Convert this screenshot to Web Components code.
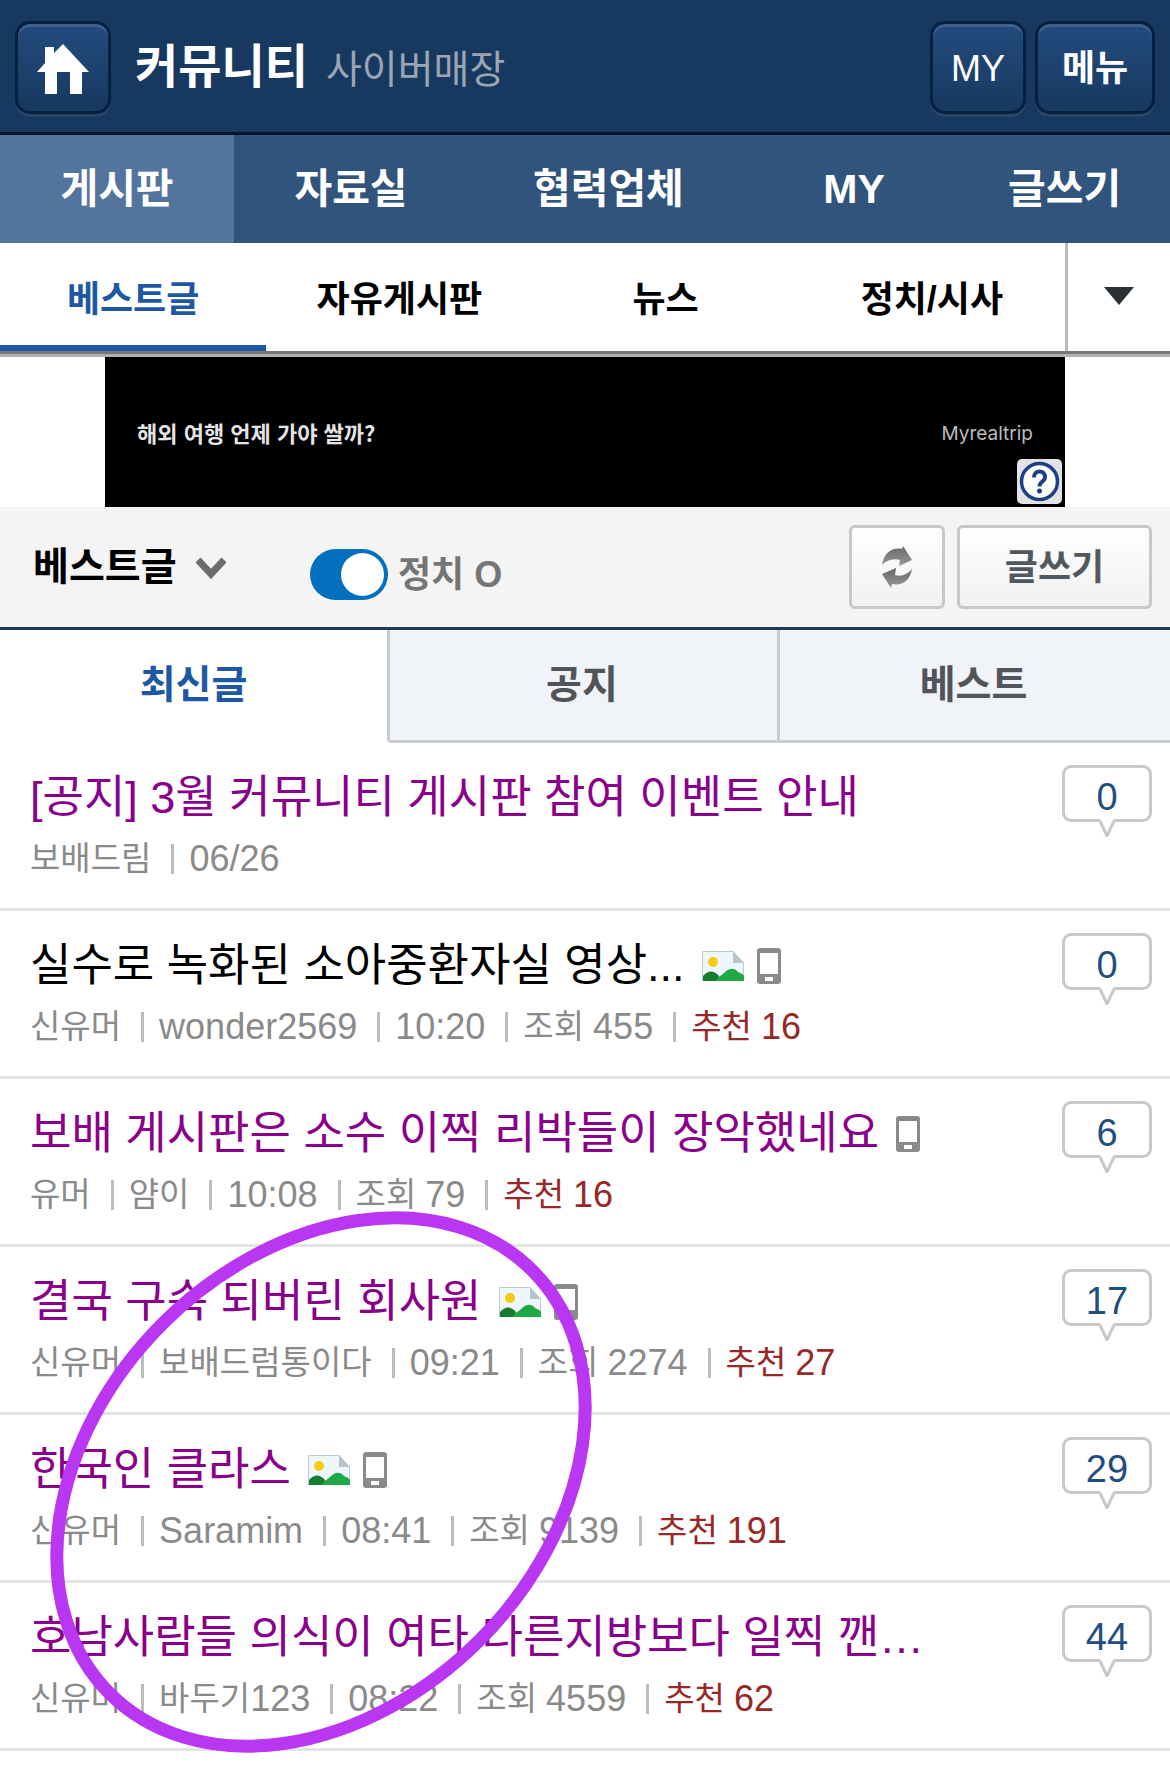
<!DOCTYPE html>
<html lang="ko">
<head>
<meta charset="utf-8">
<meta name="viewport" content="width=device-width, initial-scale=1">
<title>커뮤니티</title>
<style>
    body {
        min-height: 100vh;
        margin: 0;
        background: #fff;
        color: #000;
        font-family: "Liberation Sans", "Noto Sans CJK KR", sans-serif;
    }
</style>
</head>
<body>
<community-page></community-page>

<script>
class SiteHeader extends HTMLElement {

    constructor() {
        super();
        this.attachShadow({mode: 'open'});
        this.render();
    }

    render() {
        this.shadowRoot.innerHTML =
        `
        <style>
            :host {
                display: block;
                background: #17395f;
                border-bottom: 3px solid #03142c;
            }
            header {
                display: flex;
                align-items: center;
                gap: 9px;
                height: 93px;
                padding: 21px 15px 18px;
            }
            .btn {
                box-sizing: border-box;
                display: flex;
                align-items: center;
                justify-content: center;
                width: 96px;
                height: 93px;
                padding: 3px 0 0;
                border: 3px solid #06203f;
                border-radius: 15px;
                background: linear-gradient(#244b7e, #17395f);
                box-shadow: inset 0 3px 0 #3f608c, 0 3px 0 #2b4767;
                color: #fff;
                font: 500 36px/48px "Liberation Sans", "Noto Sans CJK KR", sans-serif;
            }
            .menu { width: 120px; font-weight: 700; }
            .titles {
                display: flex;
                align-items: baseline;
                gap: 18px;
                flex: 1;
                margin: 0 0 2px 15px;
                white-space: nowrap;
            }
            h1 { margin: 0; font-size: 47px; line-height: 60px; }
            a { text-decoration: none; }
            .titles a { color: #fff; }
            .titles .sub { color: #9ba5b3; font-size: 39px; font-weight: 400; }
        </style>
        <header>
            <a class="btn" href="#" aria-label="홈">
                <svg width="52" height="50" viewBox="0 0 52 50"><path fill="#fff" d="M26 0 52 28H45V50H33V28H20V50H8V28H0L8 19V3H17V9Z"/></svg>
            </a>
            <div class="titles">
                <h1><a href="#">커뮤니티</a></h1>
                <a class="sub" href="#">사이버매장</a>
            </div>
            <button class="btn">MY</button>
            <button class="btn menu">메뉴</button>
        </header>
        `;
    }
}

class MainNav extends HTMLElement {

    constructor() {
        super();
        this.attachShadow({mode: 'open'});
        this.render();
    }

    render() {
        this.shadowRoot.innerHTML =
        `
        <style>
            :host { display: block; background: #30547b; }
            nav {
                display: grid;
                grid-template-columns: 20fr 20fr 24fr 18fr 18fr;
            }
            a {
                padding: 26px 0;
                color: #fff;
                font-size: 41px;
                font-weight: 700;
                line-height: 56px;
                text-align: center;
                text-decoration: none;
            }
            .on { background: #52749d; }
        </style>
        <nav>
            <a class="on" href="#">게시판</a>
            <a href="#">자료실</a>
            <a href="#">협력업체</a>
            <a href="#">MY</a>
            <a href="#">글쓰기</a>
        </nav>
        `;
    }
}

class SubNav extends HTMLElement {

    constructor() {
        super();
        this.attachShadow({mode: 'open'});
        this.render();
    }

    render() {
        this.shadowRoot.innerHTML =
        `
        <style>
            :host {
                display: block;
                border-bottom: 3px solid #b0b0b0;
            }
            nav {
                display: flex;
                border-bottom: 3px solid #777;
            }
            a {
                flex: 1;
                padding: 32px 0 20px;
                border-bottom: 6px solid transparent;
                color: #000;
                font-size: 36px;
                font-weight: 700;
                line-height: 50px;
                text-align: center;
                text-decoration: none;
            }
            .on { color: #1e58a5; border-color: #1e58a5; }
            button {
                width: 105px;
                padding: 0;
                border: 0;
                border-left: 3px solid #bababa;
                background: #fff;
            }
        </style>
        <nav>
            <a class="on" href="#">베스트글</a>
            <a href="#">자유게시판</a>
            <a href="#">뉴스</a>
            <a href="#">정치/시사</a>
            <button aria-label="더보기">
                <svg width="30" height="18" viewBox="0 0 30 18"><path fill="#2b3034" d="M0 0H30L15 18Z"/></svg>
            </button>
        </nav>
        `;
    }
}

class AdBanner extends HTMLElement {

    constructor() {
        super();
        this.attachShadow({mode: 'open'});
        this.render();
    }

    render() {
        this.shadowRoot.innerHTML =
        `
        <style>
            :host { display: block; }
            .ad {
                position: relative;
                display: flex;
                align-items: center;
                justify-content: space-between;
                box-sizing: border-box;
                max-width: 960px;
                height: 150px;
                margin: 0 auto;
                padding: 0 32px;
                background: #000;
                color: #e4e4e4;
                font: 700 22px/28px "Noto Sans CJK KR", sans-serif;
                text-decoration: none;
            }
            .brand { margin-top: 4px; color: #bbb; font: 19px/24px Inter, sans-serif; }
            svg { position: absolute; right: 3px; bottom: 3px; }
        </style>
        <a class="ad" href="#">
            <span>해외 여행 언제 가야 쌀까?</span>
            <span class="brand">Myrealtrip</span>
            <svg width="45" height="45" viewBox="0 0 45 45">
                <rect width="45" height="45" rx="5" fill="#e2e3e8"/>
                <circle cx="22.500" cy="22.500" r="18" fill="#fff" stroke="#1f4080" stroke-width="3.500"/>
                <path d="M17 18.500C17 10.500 28 10.500 28 18C28 23 22.500 22 22.500 27.500" fill="none" stroke="#1f4080" stroke-width="4"/>
                <circle cx="22.500" cy="32" r="2.500" fill="#1f4080"/>
            </svg>
        </a>
        `;
    }
}

class BoardToolbar extends HTMLElement {

    constructor() {
        super();
        this.attachShadow({mode: 'open'});
        this.render();
    }

    render() {
        this.shadowRoot.innerHTML =
        `
        <style>
            :host {
                display: block;
                background: #f4f4f4;
                border-bottom: 3px solid #1e3a58;
            }
            .bar {
                display: flex;
                align-items: center;
                height: 84px;
                padding: 18px 18px 18px 33px;
            }
            .board {
                display: flex;
                align-items: center;
                gap: 19px;
                margin-right: 84px;
            }
            select {
                appearance: none;
                margin: 0;
                padding: 0;
                border: 0;
                background: none;
                color: #000;
                font: 700 39px/54px "Liberation Sans", "Noto Sans CJK KR", sans-serif;
            }
            .toggle {
                display: flex;
                align-items: center;
                gap: 10px;
                margin: 15px auto 0 0;
                color: #757575;
                font-size: 36px;
                font-weight: 700;
                line-height: 51px;
            }
            input {
                appearance: none;
                display: flex;
                align-items: center;
                justify-content: flex-end;
                box-sizing: border-box;
                width: 78px;
                height: 51px;
                margin: 0;
                padding: 0 4px;
                border-radius: 26px;
                background: #0370bf;
            }
            input:not(:checked) { justify-content: flex-start; background: #bbb; }
            input::before {
                content: "";
                width: 43px;
                height: 43px;
                border-radius: 50%;
                background: #fff;
            }
            button {
                display: flex;
                align-items: center;
                justify-content: center;
                width: 96px;
                height: 84px;
                margin-right: 12px;
                padding: 0;
                border: 3px solid #c8c8c8;
                border-radius: 6px;
                background: linear-gradient(#fff, #f1f1f1);
                color: #515860;
                font: 700 36px/48px "Liberation Sans", "Noto Sans CJK KR", sans-serif;
            }
            .write { width: 195px; margin-right: 0; padding-top: 2px; }
        </style>
        <div class="bar">
            <div class="board">
                <select aria-label="게시판 선택"><option>베스트글</option></select>
                <svg width="30" height="23" viewBox="0 0 30 23"><path d="M2 4 15 18 28 4" fill="none" stroke="#6c6c6c" stroke-width="7"/></svg>
            </div>
            <label class="toggle"><input type="checkbox" checked>정치 O</label>
            <button aria-label="새로고침">
                <svg width="30" height="42" viewBox="0 0 30 42">
                    <defs><linearGradient id="g" x2="0" y2="1"><stop offset="0" stop-color="#666"/><stop offset="1" stop-color="#999"/></linearGradient></defs>
                    <path fill="url(#g)" d="M0 19C2 7 10 1 20 3L21 0 30 14 17 20 18 14C11 12 5 14 0 19Z"/>
                    <path fill="url(#g)" d="M30 23C28 35 20 40 10 38L9 42 0 28 14 22 13 29C20 31 26 28 30 23Z"/>
                </svg>
            </button>
            <button class="write">글쓰기</button>
        </div>
        `;
    }
}

class BoardTabs extends HTMLElement {

    constructor() {
        super();
        this.attachShadow({mode: 'open'});
        this.render();
    }

    render() {
        this.shadowRoot.innerHTML =
        `
        <style>
            :host { display: block; }
            nav {
                display: grid;
                grid-template-columns: 387fr 390fr 393fr;
            }
            a {
                padding: 28px 3px 29px 0;
                border-bottom: 3px solid #c9cbcf;
                border-left: 3px solid #c9cbcf;
                background: #f0f3f8;
                color: #515459;
                font-size: 39px;
                font-weight: 700;
                line-height: 53px;
                text-align: center;
                text-decoration: none;
            }
            .on + a { border-bottom-left-radius: 4px; }
            .on { border-color: transparent; background: #fff; color: #1e58a5; }
        </style>
        <nav>
            <a class="on" href="#">최신글</a>
            <a href="#">공지</a>
            <a href="#">베스트</a>
        </nav>
        `;
    }
}

class PictureIcon extends HTMLElement {

    constructor() {
        super();
        this.attachShadow({mode: 'open'});
        this.shadowRoot.innerHTML =
        `
        <style>
            :host { display: block; }
            svg { display: block; }
        </style>
        <svg width="42" height="30" viewBox="0 0 42 30">
            <path fill="#eff7fc" stroke="#b9cbd5" d="M.5 29.500V.5H31L41.500 12V29.500Z"/>
            <path fill="#b5c6d0" d="M31 0 42 12H31Z"/>
            <circle cx="11" cy="11" r="5" fill="#f5cc12"/>
            <path fill="#1fa845" d="M10 30C16 25 18 26 22 22C27 17 32 16 36 21C38 22 40 22 42 25V30Z"/>
            <path fill="#157c32" d="M1 30V25C6 19 12 19 17 25L14 30Z"/>
        </svg>
        `;
    }
}

class PhoneIcon extends HTMLElement {

    constructor() {
        super();
        this.attachShadow({mode: 'open'});
        this.shadowRoot.innerHTML =
        `
        <style>
            :host { display: block; }
            svg { display: block; }
        </style>
        <svg width="24" height="36" viewBox="0 0 24 36">
            <path fill="#8a8a8a" fill-rule="evenodd" d="M3 0H21Q24 0 24 3V33Q24 36 21 36H3Q0 36 0 33V3Q0 0 3 0ZM3 5V26H21V5ZM8 29V33H16V29Z"/>
        </svg>
        `;
    }
}

class PostItem extends HTMLElement {

    constructor() {
        super();
        this.attachShadow({mode: 'open'});
        this.render();
    }

    render() {
        this.shadowRoot.innerHTML =
        `
        <style>
            :host {
                display: flex;
                align-items: flex-start;
                justify-content: space-between;
                padding: 28px 18px 29px 30px;
                border-bottom: 3px solid #e4e4e4;
            }
            .title {
                display: flex;
                align-items: center;
                gap: 13px;
                color: #8b008b;
                font-size: 45px;
                line-height: 54px;
                white-space: nowrap;
                text-decoration: none;
            }
            .text { margin-right: 4px; }
            :host([unread]) .title { color: #000; }
            .meta {
                display: flex;
                align-items: center;
                margin-top: 14px;
                color: #8a8a8a;
                font-size: 33px;
                line-height: 40px;
                white-space: nowrap;
            }
            ::slotted([slot=meta]) {
                display: flex;
                align-items: center;
            }
            ::slotted([slot=meta]:not(:first-of-type))::before {
                content: "";
                width: 3px;
                height: 30px;
                margin: 0 15px 0 20px;
                background: #bdbdbd;
            }
            .count {
                position: relative;
                box-sizing: border-box;
                width: 90px;
                margin-top: -6px;
                padding: 7px 0 0;
                border: 3px solid #c8c8c8;
                border-radius: 9px;
                color: #1f4f7f;
                font-size: 38px;
                line-height: 44px;
                text-align: center;
                text-decoration: none;
            }
            .tail { position: absolute; left: 33px; top: 51px; }
        </style>
        <div>
            <a class="title" href="#"><span class="text"><slot></slot></span><slot name="icon"></slot></a>
            <div class="meta"><slot name="meta"></slot></div>
        </div>
        <a class="count" href="#">${this.getAttribute('count')}
            <svg class="tail" width="18" height="18" viewBox="0 0 18 18"><path d="M1 0 9 17 17 0" fill="#fff" stroke="#c8c8c8" stroke-width="3"/><path fill="#fff" d="M2 0H16V1H2Z"/></svg>
        </a>
        `;
    }
}

class PostList extends HTMLElement {

    constructor() {
        super();
        this.attachShadow({mode: 'open'});
        this.render();
    }

    render() {
        this.shadowRoot.innerHTML =
        `
        <style>
            :host { display: block; position: relative; }
            .meta { font-size: 33px; }
            .num { font-size: 36px; }
            .meta .num { margin-left: 9px; }
            .best { color: #982828; }
            /* hand-drawn ring over the lower rows */
            .ring {
                position: absolute;
                left: 44px;
                top: 461px;
                pointer-events: none;
            }
        </style>
        <post-item count="0">[공지] 3월 커뮤니티 게시판 참여 이벤트 안내
            <span slot="meta">보배드림</span>
            <span slot="meta" class="num">06/26</span>
        </post-item>
        <post-item count="0" unread>실수로 녹화된 소아중환자실 영상...
            <picture-icon slot="icon"></picture-icon>
            <phone-icon slot="icon"></phone-icon>
            <span slot="meta">신유머</span>
            <span slot="meta" class="num">wonder2569</span>
            <span slot="meta" class="num">10:20</span>
            <span slot="meta" class="meta">조회 <span class="num">455</span></span>
            <span slot="meta" class="meta"><span class="best">추천</span> <span class="num best">16</span></span>
        </post-item>
        <post-item count="6">보배 게시판은 소수 이찍 리박들이 장악했네요
            <phone-icon slot="icon"></phone-icon>
            <span slot="meta">유머</span>
            <span slot="meta">얌이</span>
            <span slot="meta" class="num">10:08</span>
            <span slot="meta" class="meta">조회 <span class="num">79</span></span>
            <span slot="meta" class="meta"><span class="best">추천</span> <span class="num best">16</span></span>
        </post-item>
        <post-item count="17">결국 구속 되버린 회사원
            <picture-icon slot="icon"></picture-icon>
            <phone-icon slot="icon"></phone-icon>
            <span slot="meta">신유머</span>
            <span slot="meta">보배드럼통이다</span>
            <span slot="meta" class="num">09:21</span>
            <span slot="meta" class="meta">조회 <span class="num">2274</span></span>
            <span slot="meta" class="meta"><span class="best">추천</span> <span class="num best">27</span></span>
        </post-item>
        <post-item count="29">한국인 클라스
            <picture-icon slot="icon"></picture-icon>
            <phone-icon slot="icon"></phone-icon>
            <span slot="meta">신유머</span>
            <span slot="meta" class="num">Saramim</span>
            <span slot="meta" class="num">08:41</span>
            <span slot="meta" class="meta">조회 <span class="num">9139</span></span>
            <span slot="meta" class="meta"><span class="best">추천</span> <span class="num best">191</span></span>
        </post-item>
        <post-item count="44">호남사람들 의식이 여타 다른지방보다 일찍 깬…
            <span slot="meta">신유머</span>
            <span slot="meta">바두기<span class="num">123</span></span>
            <span slot="meta" class="num">08:22</span>
            <span slot="meta" class="meta">조회 <span class="num">4559</span></span>
            <span slot="meta" class="meta"><span class="best">추천</span> <span class="num best">62</span></span>
        </post-item>
        <svg class="ring" width="554" height="556" viewBox="0 0 554 556">
            <ellipse cx="277" cy="278" rx="299" ry="224" transform="rotate(-45 277 278)" fill="none" stroke="#b936f2" stroke-width="13"/>
        </svg>
        `;
    }
}

class CommunityPage extends HTMLElement {

    constructor() {
        super();
        this.attachShadow({mode: 'open'});
        this.shadowRoot.innerHTML =
        `
        <style>
            :host { display: block; }
        </style>
        <site-header></site-header>
        <main-nav></main-nav>
        <sub-nav></sub-nav>
        <ad-banner></ad-banner>
        <board-toolbar></board-toolbar>
        <board-tabs></board-tabs>
        <post-list></post-list>
        `;
    }
}

customElements.define('site-header', SiteHeader);
customElements.define('main-nav', MainNav);
customElements.define('sub-nav', SubNav);
customElements.define('ad-banner', AdBanner);
customElements.define('board-toolbar', BoardToolbar);
customElements.define('board-tabs', BoardTabs);
customElements.define('picture-icon', PictureIcon);
customElements.define('phone-icon', PhoneIcon);
customElements.define('post-item', PostItem);
customElements.define('post-list', PostList);
customElements.define('community-page', CommunityPage);
</script>
</body>
</html>
